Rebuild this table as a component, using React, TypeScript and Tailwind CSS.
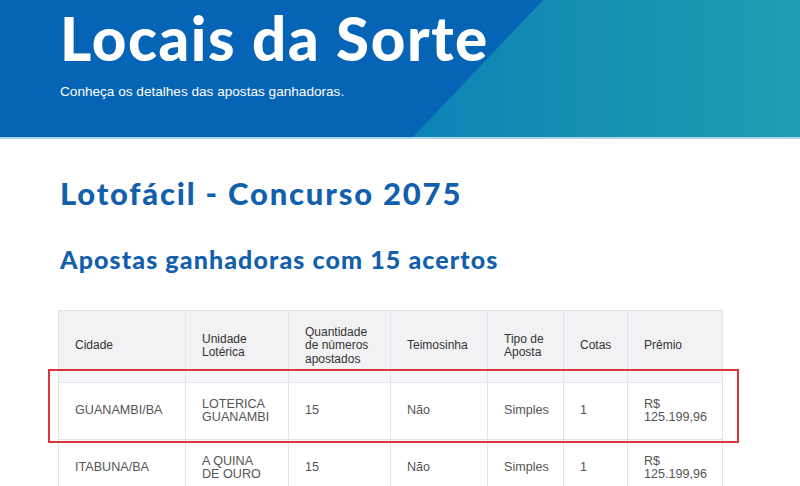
const rows = [
  { cidade: "GUANAMBI/BA", unidade: ["LOTERICA", "GUANAMBI"], qtd: "15", teimosinha: "Não", tipo: "Simples", cotas: "1", premio: ["R$", "125.199,96"] },
  { cidade: "ITABUNA/BA", unidade: ["A QUINA", "DE OURO"], qtd: "15", teimosinha: "Não", tipo: "Simples", cotas: "1", premio: ["R$", "125.199,96"] },
];

const th = "border border-[#e3e3e7] px-4 pt-[12px] pb-0 text-left align-middle font-normal text-[12px] leading-[13.5px] text-[#333]";
const td = "border border-[#e3e3e7] px-4 align-middle text-[12.6px] leading-[13.5px] text-[#555]";

export default function App() {
  return (
    <div className="w-[800px] h-[486px] overflow-hidden bg-white font-['Liberation_Sans',Arial,sans-serif]">
      <header className="relative h-[139px] bg-[linear-gradient(to_right,#0a7fb6_45%,#1f9db0)] border-b-2 border-[#a9d6e6]">
        <div className="absolute inset-0 bg-[#0664b6] [clip-path:polygon(0_0,543px_0,413px_100%,0_100%)]" />
        <div className="relative pl-[60px] pt-[2px]">
          <h1 className="font-['Lato',sans-serif] font-black text-[60px] leading-[72px] text-white tracking-[1.6px]">
            Locais da Sorte
          </h1>
          <p className="mt-[8px] text-[13.6px] text-white">Conheça os detalhes das apostas ganhadoras.</p>
        </div>
      </header>

      <main className="relative pl-[60px] pt-[34px]">
        <h2 className="font-['Lato',sans-serif] font-black text-[31px] leading-[40px] text-[#1260ad] tracking-[1.8px]">
          Lotofácil - Concurso 2075
        </h2>
        <h3 className="mt-[30px] font-['Lato',sans-serif] font-black text-[25px] leading-[32px] text-[#1260ad] tracking-[1.1px]">
          Apostas ganhadoras com 15 acertos
        </h3>

        <table className="-ml-[2px] mt-[35px] w-[664px] table-fixed border-collapse">
          <colgroup>
            <col className="w-[127px]" />
            <col className="w-[103px]" />
            <col className="w-[102px]" />
            <col className="w-[97px]" />
            <col className="w-[76px]" />
            <col className="w-[64px]" />
            <col className="w-[95px]" />
          </colgroup>
          <thead className="bg-[#f2f2f4]">
            <tr className="h-[59px]">
              <th className={th}>Cidade</th>
              <th className={th}>Unidade<br />Lotérica</th>
              <th className={th}>Quantidade<br />de números<br />apostados</th>
              <th className={th}>Teimosinha</th>
              <th className={th}>Tipo de<br />Aposta</th>
              <th className={th}>Cotas</th>
              <th className={th}>Prêmio</th>
            </tr>
          </thead>
          <tbody>
            <tr className="h-[13px] bg-[#f4f5f8]">
              {Array.from({ length: 7 }).map((_, i) => (
                <td key={i} className="border border-[#e3e3e7]" />
              ))}
            </tr>
            {rows.map((r) => (
              <tr key={r.cidade} className="h-[57px]">
                <td className={td}>{r.cidade}</td>
                <td className={td}>{r.unidade[0]}<br />{r.unidade[1]}</td>
                <td className={td}>{r.qtd}</td>
                <td className={td}>{r.teimosinha}</td>
                <td className={td}>{r.tipo}</td>
                <td className={td}>{r.cotas}</td>
                <td className={td}>{r.premio[0]}<br />{r.premio[1]}</td>
              </tr>
            ))}
          </tbody>
        </table>

        <div className="absolute left-[48px] top-[230px] w-[691px] h-[74px] border-2 border-[#d9363e]" />
      </main>
    </div>
  );
}
